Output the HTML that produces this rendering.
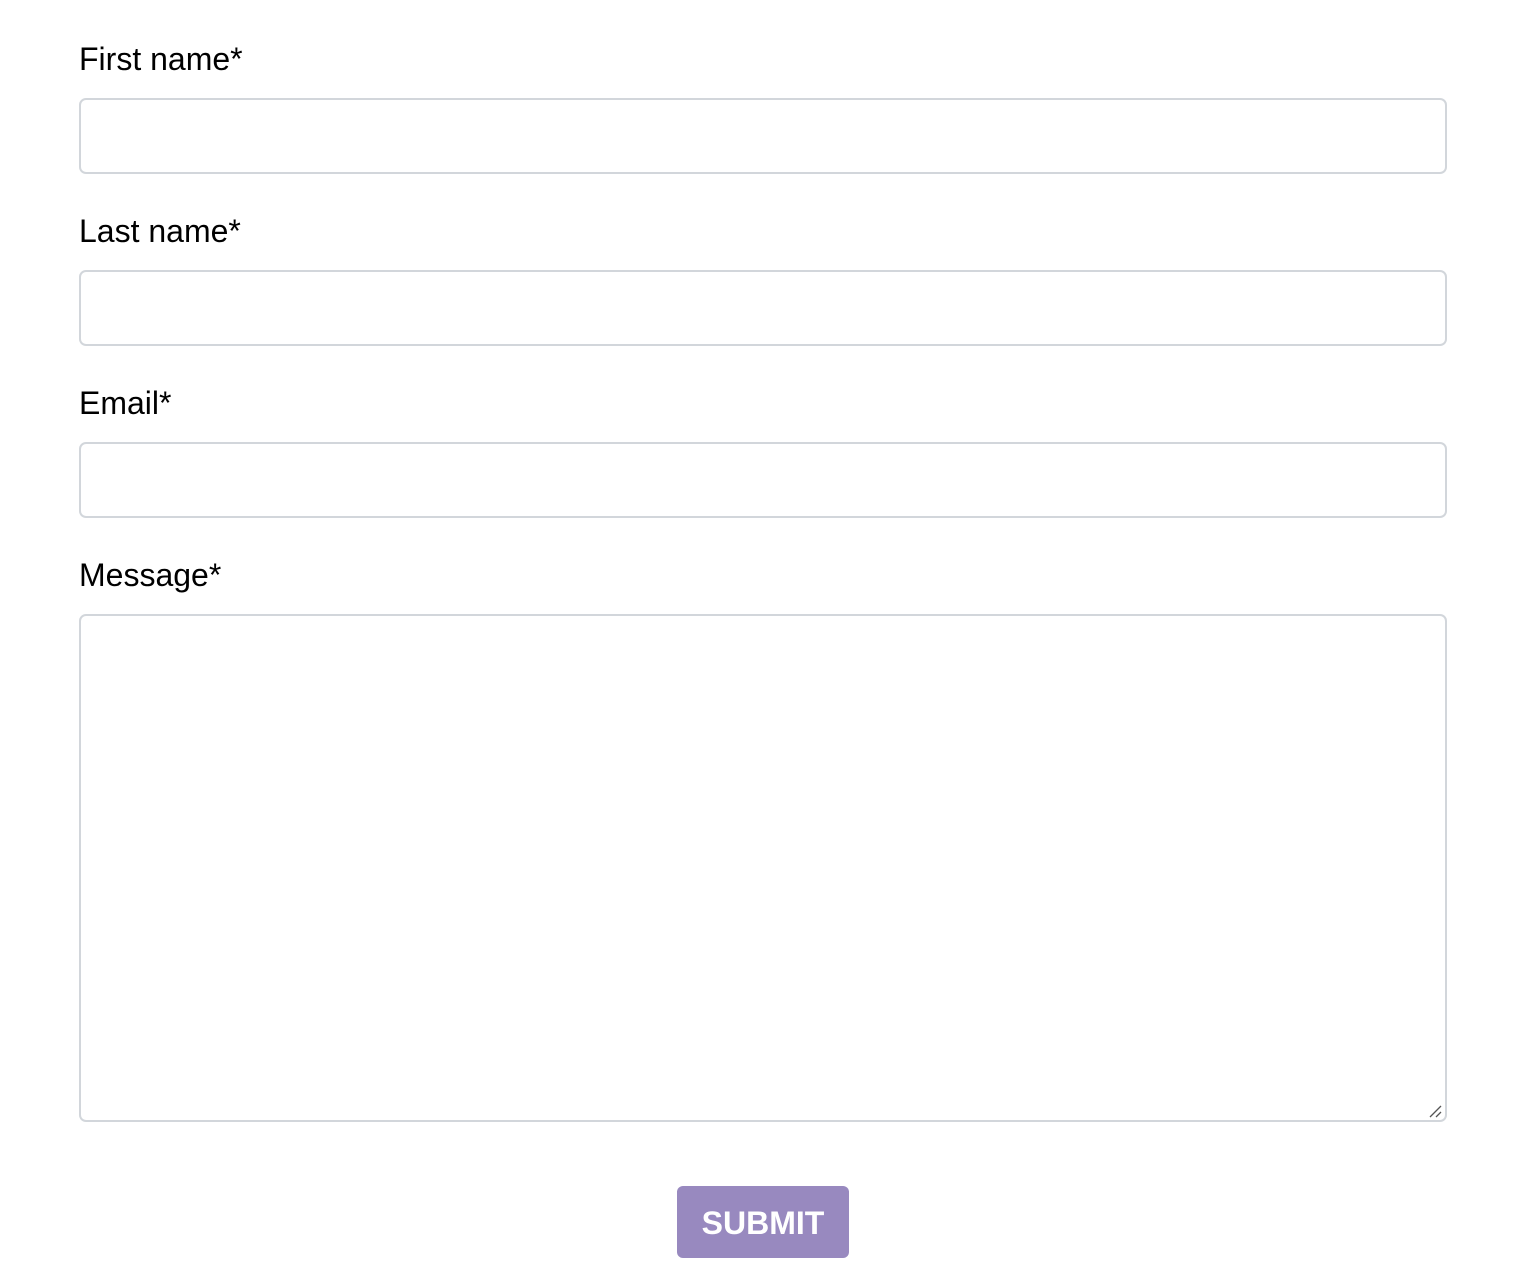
<!DOCTYPE html>
<html><head><style>
html,body{margin:0;padding:0;background:#fff;}
body{width:1536px;height:1286px;position:relative;font-family:"Liberation Sans",Arial,sans-serif;}
.l{position:absolute;left:79px;font-size:32px;color:#000;line-height:1;}
.b{position:absolute;left:79px;width:1368px;box-sizing:border-box;border:2px solid #d2d6db;border-radius:7px;background:#fff;}
.btn{position:absolute;left:677px;top:1186px;width:172px;height:72px;background:#9889bf;border-radius:6px;color:#fff;font-weight:bold;font-size:32px;text-align:center;line-height:74px;}
</style></head><body>
<div class="l" style="top:43px">First name*</div>
<div class="b" style="top:98px;height:76px"></div>
<div class="l" style="top:215px">Last name*</div>
<div class="b" style="top:270px;height:76px"></div>
<div class="l" style="top:387px">Email*</div>
<div class="b" style="top:442px;height:76px"></div>
<div class="l" style="top:559px">Message*</div>
<div class="b" style="top:614px;height:508px"></div>
<svg style="position:absolute;left:1428px;top:1104px" width="14" height="14"><path d="M2 13L13 2M8 13L13 8" stroke="#555" stroke-width="1.3"/></svg>
<div class="btn">SUBMIT</div>
</body></html>
